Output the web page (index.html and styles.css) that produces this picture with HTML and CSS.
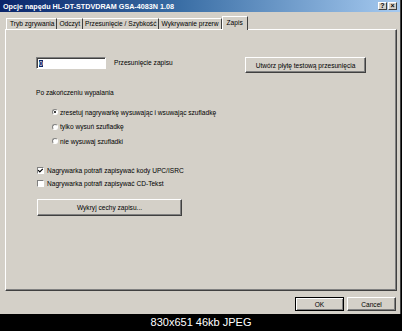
FILE: index.html
```html
<!DOCTYPE html>
<html lang="pl">
<head>
    <meta charset="UTF-8">
    <title>Opcje napędu</title>
    <link rel="stylesheet" href="styles.css">
</head>
<body>
    <div class="window">
        <div class="titlebar">
            <span class="title">Opcje napędu HL-DT-STDVDRAM GSA-4083N 1.08</span>
            <div class="title-btns">
                <span class="tbtn">?</span>
                <span class="tbtn">×</span>
            </div>
        </div>

        <div class="tabs">
            <div class="tab first">Tryb zgrywania</div>
            <div class="tab">Odczyt</div>
            <div class="tab">Przesunięcie / Szybkość</div>
            <div class="tab">Wykrywanie przerw</div>
            <div class="tab active">Zapis</div>
        </div>

        <div class="panel">
            <div class="offset-row">
                <div class="input"><span class="sel">0</span></div>
                <span class="label">Przesunięcie zapisu</span>
                <button class="btn test-btn">Utwórz płytę testową przesunięcia</button>
            </div>

            <div class="group-title">Po zakończeniu wypalania</div>
            <div class="radios">
                <div class="option"><span class="radio checked"></span>zresetuj nagrywarkę wysuwając i wsuwając szufladkę</div>
                <div class="option"><span class="radio"></span>tylko wysuń szufladkę</div>
                <div class="option"><span class="radio"></span>nie wysuwaj szufladki</div>
            </div>

            <div class="checks">
                <div class="option">
                    <span class="check">
                        <svg viewBox="0 0 7 7" width="7" height="7"><path d="M1.2 3.2 L2.8 4.8 L5.8 1.8" fill="none" stroke="#000" stroke-width="1.2"/></svg>
                    </span>Nagrywarka potrafi zapisywać kody UPC/ISRC
                </div>
                <div class="option"><span class="check"></span>Nagrywarka potrafi zapisywać CD-Tekst</div>
            </div>

            <button class="btn detect-btn">Wykryj cechy zapisu...</button>
        </div>

        <div class="footer">
            <button class="btn default">OK</button>
            <button class="btn">Cancel</button>
        </div>
    </div>
    <div class="caption">830x651 46kb JPEG</div>
</body>
</html>
```

FILE: styles.css
```css
body {
    margin: 0;
    width: 402px;
    height: 331px;
    background: #000;
    font-family: "Liberation Sans", Arial, sans-serif;
    font-size: 6.6px;
    color: #000;
    overflow: hidden;
}
.window {
    width: 401px;
    height: 314px;
    box-sizing: border-box;
    background: #d4d0c8;
    border-right: 1px solid #404040;
    padding: 0 3px 0 5px;
    position: relative;
}
.titlebar {
    height: 12px;
    margin: 0 -3px 0 -5px;
    padding: 0 3px;
    background: linear-gradient(90deg, #0a246a 0%, #3a6ea5 45%, #a6caf0 100%);
    display: flex;
    align-items: center;
    justify-content: space-between;
}
.title {
    color: #fff;
    font-weight: bold;
    font-size: 7.2px;
    white-space: nowrap;
}
.title-btns {
    display: flex;
    gap: 1px;
}
.tbtn {
    width: 9px;
    height: 8px;
    box-sizing: border-box;
    background: #d4d0c8;
    border: 1px solid;
    border-color: #fff #404040 #404040 #fff;
    font-size: 7px;
    font-weight: bold;
    line-height: 6px;
    text-align: center;
}
.tabs {
    display: flex;
    align-items: flex-end;
    height: 13px;
    margin-top: 4px;
    padding-left: 1px;
    position: relative;
    z-index: 1;
}
.tab {
    height: 11px;
    box-sizing: border-box;
    padding: 0 2px;
    border-top: 1px solid #fff;
    border-right: 1px solid #404040;
    line-height: 10px;
    white-space: nowrap;
}
.tab.first {
    border-left: 1px solid #fff;
    padding-left: 3px;
}
.tab.active {
    height: 14px;
    margin-bottom: -1px;
    padding: 0 4px;
    border-left: 1px solid #fff;
    background: #d4d0c8;
    line-height: 11px;
}
.panel {
    height: 262px;
    box-sizing: border-box;
    border: 1px solid;
    border-color: #fff #404040 #404040 #fff;
    box-shadow: inset -1px -1px 0 #808080;
    padding: 27px 30px 0 30px;
}
.offset-row {
    display: flex;
    align-items: flex-start;
}
.input {
    width: 70px;
    height: 12px;
    box-sizing: border-box;
    background: #fff;
    border: 1px solid;
    border-color: #808080 #fff #fff #808080;
    box-shadow: inset 1px 1px 0 #404040;
    padding: 2px 0 0 2px;
}
.sel {
    display: block;
    width: 4px;
    height: 7px;
    background: #0a246a;
    color: #fff;
    line-height: 7px;
}
.label {
    margin-left: 8px;
    line-height: 12px;
}
.btn {
    font: inherit;
    color: #000;
    background: #d4d0c8;
    border: 1px solid;
    border-color: #fff #404040 #404040 #fff;
    box-shadow: inset -1px -1px 0 #808080;
    padding: 0;
    margin: 0;
}
.test-btn {
    margin-left: auto;
    width: 121px;
    height: 16px;
}
.group-title {
    margin-top: 16px;
    line-height: 8px;
}
.radios {
    margin-top: 8px;
    padding-left: 16px;
}
.option {
    display: flex;
    align-items: center;
    height: 14.5px;
    white-space: nowrap;
}
.radio {
    width: 6px;
    height: 6px;
    box-sizing: border-box;
    border-radius: 50%;
    background: #fff;
    border: 1px solid;
    border-color: #808080 #fff #fff #808080;
    margin-right: 2px;
    position: relative;
}
.radio.checked::after {
    content: "";
    position: absolute;
    left: 1px;
    top: 1px;
    width: 2px;
    height: 2px;
    border-radius: 50%;
    background: #000;
}
.checks {
    margin-top: 15px;
    padding-left: 1px;
}
.checks .option {
    height: 13px;
}
.check {
    width: 7px;
    height: 7px;
    box-sizing: border-box;
    background: #fff;
    border: 1px solid;
    border-color: #808080 #fff #fff #808080;
    margin-right: 3px;
    display: flex;
    align-items: center;
    justify-content: center;
}
.check svg {
    display: block;
    flex: none;
}
.detect-btn {
    display: block;
    margin-top: 9px;
    margin-left: 1px;
    width: 145px;
    height: 17px;
}
.footer {
    display: flex;
    justify-content: flex-end;
    gap: 3px;
    margin-top: 6px;
    padding-right: 1px;
}
.footer .btn {
    width: 49px;
    height: 14px;
}
.footer .btn.default {
    border-color: #000;
    box-shadow: inset 1px 1px 0 #fff, inset -1px -1px 0 #808080;
}
.caption {
    color: #fff;
    font-family: "Liberation Sans", Arial, sans-serif;
    font-size: 11px;
    text-align: center;
    line-height: 17px;
}
```
